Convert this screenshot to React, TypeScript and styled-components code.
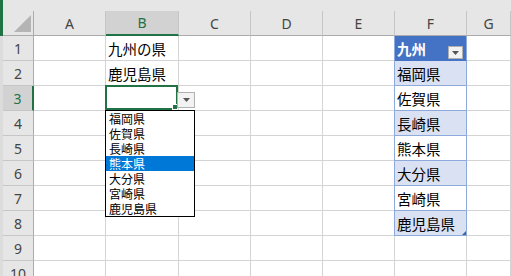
import React from "react";
import styled, { createGlobalStyle, css } from "styled-components";

const GlobalStyle = createGlobalStyle`
  html, body {
    margin: 0;
    padding: 0;
    background: #ffffff;
    overflow: hidden;
  }
`;

const GREEN = "#217346";
const GRID = "#d4d4d4";
const HEAD_BG = "#e6e6e6";
const CJK = `"Noto Sans CJK JP", "Noto Sans", sans-serif`;

const Sheet = styled.div`
  display: grid;
  grid-template-columns: 3px 31px 72px 73px 72px 72px 72px 72px 1fr;
  grid-template-rows: 11px 25px repeat(10, 25px);
  width: 511px;
  height: 276px;
  overflow: hidden;
  font-family: ${CJK};
`;

const LeftStrip = styled.div<{ $active?: boolean }>`
  grid-column: 1;
  background: ${({ $active }) => ($active ? GREEN : "#dcdcdc")};
`;

const TopStrip = styled.div`
  grid-column: 2 / -1;
  background: ${HEAD_BG};
`;

const Corner = styled.div`
  display: flex;
  align-items: flex-end;
  justify-content: flex-end;
  padding: 0 2px 3px 0;
  box-sizing: border-box;
  background: ${HEAD_BG};
  border-right: 1px solid #ababab;
  border-bottom: 1px solid #ababab;
`;

const ColHeader = styled.div<{ $selected?: boolean }>`
  box-sizing: border-box;
  display: flex;
  align-items: center;
  justify-content: center;
  font-family: "Noto Sans", "Liberation Sans", sans-serif;
  font-size: 14px;
  color: #444444;
  background: ${HEAD_BG};
  border-right: 1px solid #c6c6c6;
  border-bottom: 1px solid #ababab;
  ${({ $selected }) =>
    $selected &&
    css`
      background: #d2d2d2;
      color: ${GREEN};
      border-bottom: 2px solid ${GREEN};
    `}
`;

const RowHeader = styled.div<{ $selected?: boolean }>`
  box-sizing: border-box;
  display: flex;
  align-items: center;
  justify-content: center;
  padding-top: 1px;
  font-family: "Noto Sans", "Liberation Sans", sans-serif;
  font-size: 14px;
  color: #444444;
  background: ${HEAD_BG};
  border-right: 1px solid #ababab;
  border-bottom: 1px solid #c6c6c6;
  ${({ $selected }) =>
    $selected &&
    css`
      background: #d2d2d2;
      color: ${GREEN};
      border-right: 2px solid ${GREEN};
    `}
`;

const Cell = styled.div`
  position: relative;
  box-sizing: border-box;
  display: flex;
  align-items: center;
  padding: 1px 0 0 2px;
  font-size: 14.5px;
  color: #000000;
  white-space: nowrap;
  border-right: 1px solid ${GRID};
  border-bottom: 1px solid ${GRID};
`;

type Band = "head" | "band" | "plain";

const TableCell = styled(Cell)<{ $band: Band }>`
  border-right: 1px solid #8ea9db;
  border-bottom: 1px solid #8ea9db;
  box-shadow: -1px 0 0 #8ea9db;
  background: ${({ $band }) =>
    $band === "head" ? "#4472c4" : $band === "band" ? "#d9e1f2" : "#ffffff"};
  ${({ $band }) =>
    $band === "head" &&
    css`
      color: #ffffff;
      font-weight: 700;
      border-bottom-color: #4472c4;
    `}
`;

const Selection = styled.div`
  position: absolute;
  left: -1px;
  top: -1px;
  right: 0;
  bottom: 0;
  border: 2px solid ${GREEN};
  pointer-events: none;
`;

const FillHandle = styled.div`
  position: absolute;
  right: -2px;
  bottom: -2px;
  width: 4px;
  height: 4px;
  background: ${GREEN};
  border: 1px solid #ffffff;
`;

const DropButton = styled.div<{ $small?: boolean }>`
  position: absolute;
  box-sizing: border-box;
  display: flex;
  align-items: center;
  justify-content: center;
  background: #f2f2f2;
  border: 1px solid #b0b0b0;
  ${({ $small }) =>
    $small
      ? css`
          right: 3px;
          top: 10px;
          width: 15px;
          height: 13px;
        `
      : css`
          left: 71px;
          top: 6px;
          width: 18px;
          height: 16px;
        `}
`;

const ListBox = styled.ul`
  position: absolute;
  z-index: 2;
  left: -1px;
  top: 24px;
  width: 90px;
  margin: 0;
  padding: 0;
  box-sizing: border-box;
  list-style: none;
  background: #ffffff;
  border: 1px solid #000000;
`;

const ListItem = styled.li<{ $active?: boolean }>`
  height: 15px;
  overflow: hidden;
  padding-left: 3px;
  color: ${({ $active }) => ($active ? "#ffffff" : "#000000")};
  background: ${({ $active }) => ($active ? "#0078d7" : "transparent")};
`;

const ItemText = styled.span`
  display: inline-block;
  height: 15px;
  font-size: 12px;
  line-height: 15px;
  vertical-align: top;
`;

const ResizeGrip = styled.div`
  position: absolute;
  right: 0;
  bottom: 0;
  width: 0;
  height: 0;
  border-left: 4px solid transparent;
  border-bottom: 4px solid #3f62a8;
`;

const Arrow = () => (
  <svg width="7" height="4" viewBox="0 0 7 4">
    <path d="M0 0 H7 L3.5 4 Z" fill="#555555" />
  </svg>
);

const CornerMark = () => (
  <svg width="17" height="17" viewBox="0 0 17 17">
    <path d="M17 0 V17 H0 Z" fill="#b4b4b4" />
  </svg>
);

const columns = ["A", "B", "C", "D", "E", "F", "G"];
const prefectures = ["福岡県", "佐賀県", "長崎県", "熊本県", "大分県", "宮崎県", "鹿児島県"];
const bText: Record<number, string> = { 1: "九州の県", 2: "鹿児島県" };

export default function App() {
  const rows = Array.from({ length: 10 }, (_, i) => i + 1);

  return (
    <>
      <GlobalStyle />
      <Sheet>
        <LeftStrip $active style={{ gridRow: "1 / span 2" }} />
        <TopStrip />
        <Corner>
          <CornerMark />
        </Corner>
        {columns.map((c) => (
          <ColHeader key={c} $selected={c === "B"}>
            {c}
          </ColHeader>
        ))}
        {rows.map((r) => (
          <React.Fragment key={r}>
            <LeftStrip />
            <RowHeader $selected={r === 3}>{r}</RowHeader>
            {columns.map((c) => {
              if (c === "F" && r <= 8) {
                const band: Band = r === 1 ? "head" : r % 2 === 0 ? "band" : "plain";
                return (
                  <TableCell key={c} $band={band}>
                    {r === 1 ? "九州" : prefectures[r - 2]}
                    {r === 1 && (
                      <DropButton $small>
                        <Arrow />
                      </DropButton>
                    )}
                    {r === 8 && <ResizeGrip />}
                  </TableCell>
                );
              }
              if (c === "B" && r === 3) {
                return (
                  <Cell key={c}>
                    <Selection>
                      <FillHandle />
                    </Selection>
                    <DropButton>
                      <Arrow />
                    </DropButton>
                    <ListBox>
                      {prefectures.map((p) => (
                        <ListItem key={p} $active={p === "熊本県"}>
                          <ItemText>{p}</ItemText>
                        </ListItem>
                      ))}
                    </ListBox>
                  </Cell>
                );
              }
              return <Cell key={c}>{c === "B" ? bText[r] : null}</Cell>;
            })}
          </React.Fragment>
        ))}
      </Sheet>
    </>
  );
}
